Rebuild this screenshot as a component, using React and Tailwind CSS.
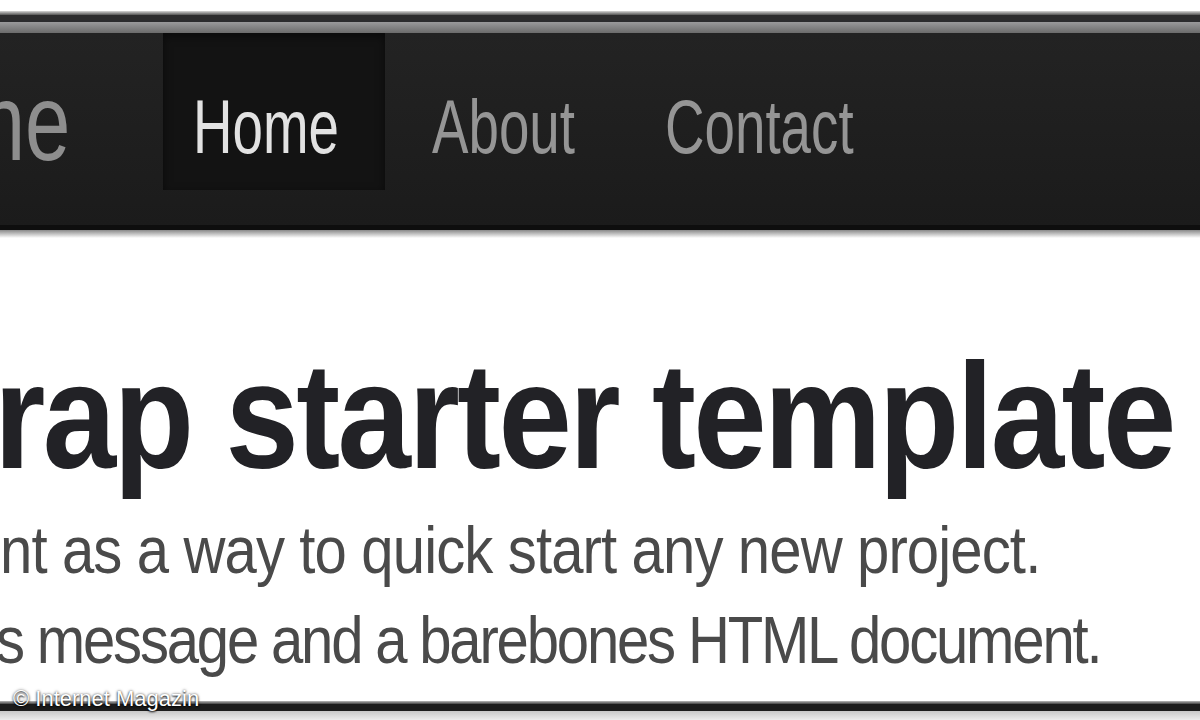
export default function App() {
  return (
    <div className="relative w-[1200px] h-[720px] overflow-hidden bg-white font-['Liberation_Sans',Arial,sans-serif]">
      {/* top edge */}
      <div className="h-[11px] bg-white" />
      <div className="h-[4px] bg-gradient-to-b from-[#d8d8d8] to-[#555]" />
      <div className="h-[7px] bg-[#2c2c2e]" />
      <div className="h-[11px] bg-gradient-to-b from-[#9a9a9c] to-[#6c6c6c]" />

      {/* navbar */}
      <div className="flex h-[192px] bg-gradient-to-b from-[#232323] to-[#1b1b1b]">
        <div className="flex w-[163px] justify-end pr-[93px] pt-[34px]">
          <span className="block origin-right scale-x-[0.74] whitespace-nowrap text-[110px] leading-none text-[#8e8e8e]">ne</span>
        </div>
        <div className="h-[157px] w-[222px] bg-[#131313] pl-[30px] pt-[56px] shadow-[inset_0_3px_10px_rgba(0,0,0,0.5)]">
          <span className="block origin-left scale-x-[0.72] whitespace-nowrap text-[76px] leading-none text-[#e2e2e2]">Home</span>
        </div>
        <div className="w-[235px] pl-[47px] pt-[56px]">
          <span className="block origin-left scale-x-[0.72] whitespace-nowrap text-[76px] leading-none text-[#959595]">About</span>
        </div>
        <div className="flex-1 pl-[45px] pt-[56px]">
          <span className="block origin-left scale-x-[0.72] whitespace-nowrap text-[76px] leading-none text-[#959595]">Contact</span>
        </div>
      </div>
      <div className="h-[5px] bg-[#0e0e0e]" />
      <div className="h-[8px] bg-gradient-to-b from-[#8a8a8a] to-white" />

      {/* content */}
      <div className="mt-[103px]">
        <h1 className="-ml-[6px] origin-left scale-x-[0.88] whitespace-nowrap text-[150px] font-bold leading-none tracking-[-3px] text-[#222226]">
          rap starter template
        </h1>
        <p className="mt-[14px] origin-left scale-x-[0.88] whitespace-nowrap text-[66px] leading-[90px] tracking-[-1px] text-[#4a4a4a]">
          nt as a way to quick start any new project.
        </p>
        <p className="-ml-[4px] origin-left scale-x-[0.88] whitespace-nowrap text-[66px] leading-[90px] tracking-[-2.5px] text-[#4a4a4a]">
          s message and a barebones HTML document.
        </p>
      </div>

      {/* bottom edge */}
      <div className="mt-[16px] h-[3px] bg-gradient-to-b from-[#bbb] to-[#444]" />
      <div className="h-[7px] bg-[#1c1c1c]" />
      <div className="h-[10px] bg-gradient-to-b from-[#c8c8c8] to-[#f0f0f0]" />

      {/* watermark */}
      <div className="absolute left-[13px] top-[688px] whitespace-nowrap text-[22px] leading-none text-white [text-shadow:0_1px_2px_rgba(0,0,0,0.9),0_0_3px_rgba(0,0,0,0.6)]">
        © Internet Magazin
      </div>
    </div>
  );
}
